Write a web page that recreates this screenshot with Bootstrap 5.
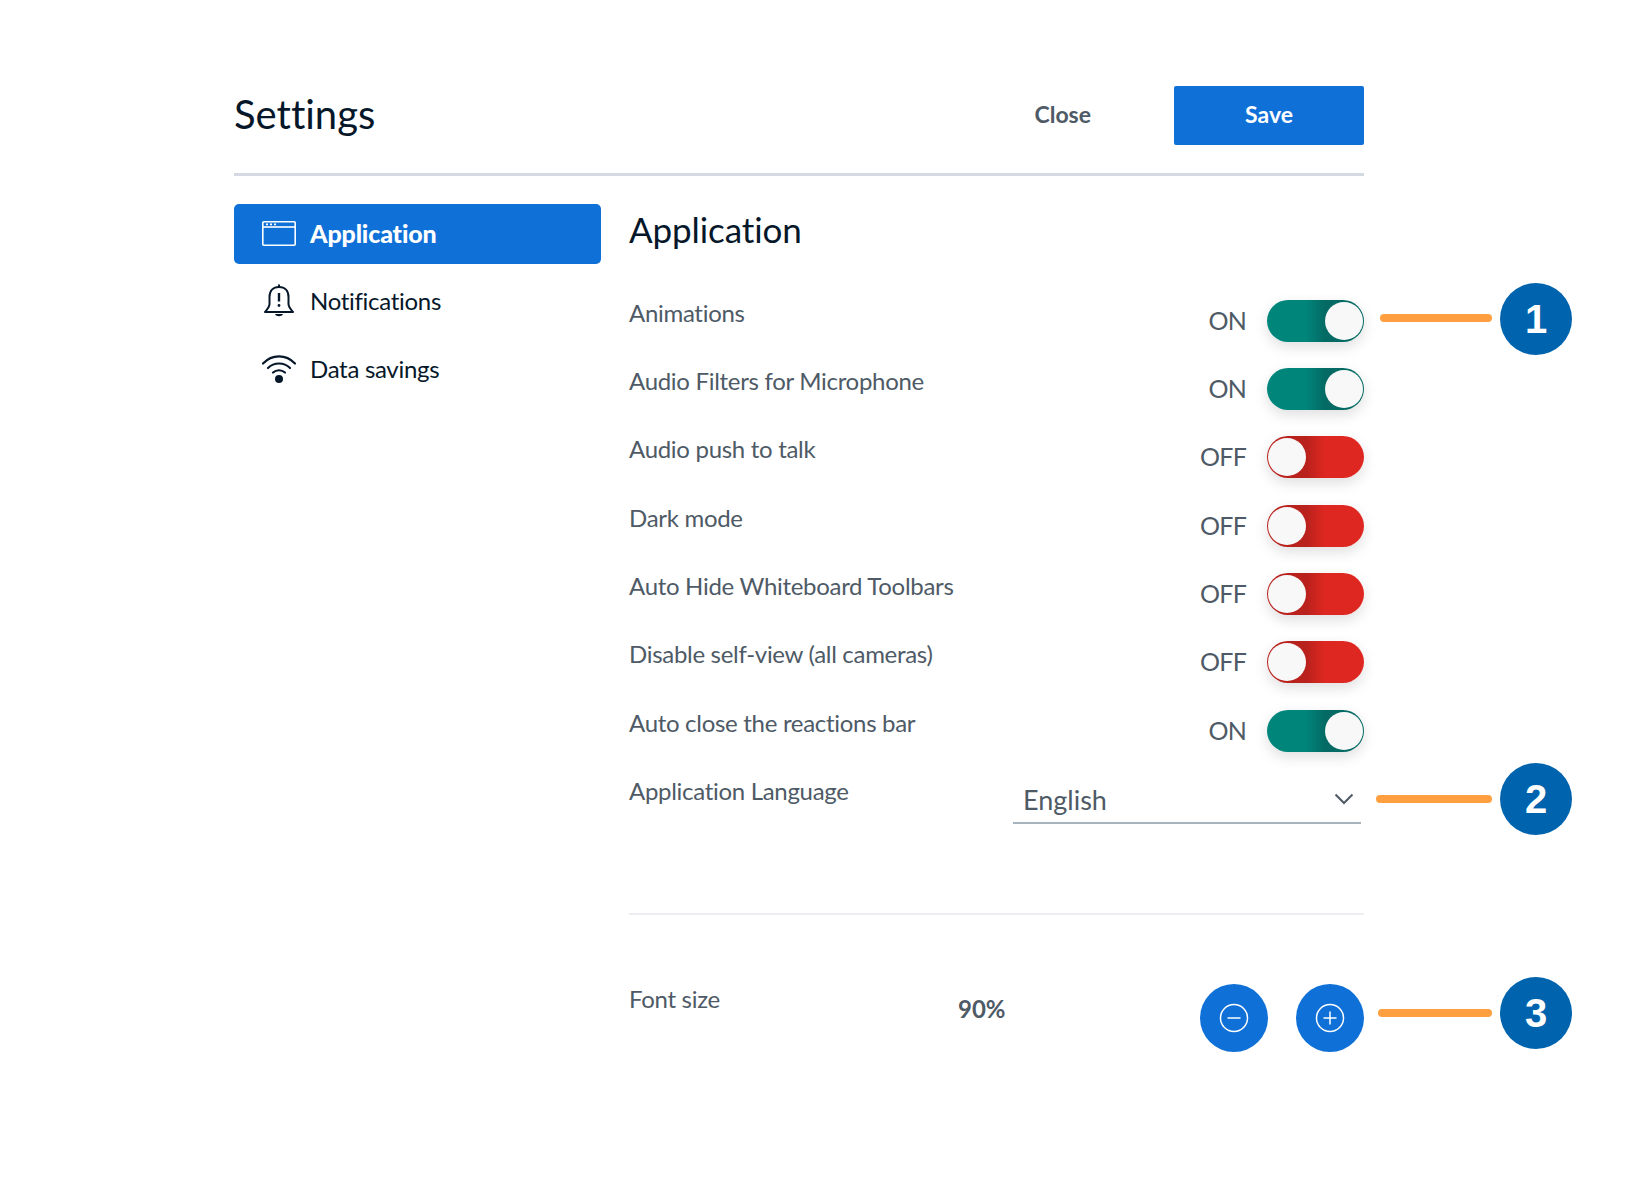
<!DOCTYPE html>
<html lang="en">
<head>
<meta charset="utf-8">
<title>Settings</title>
<link href="https://cdn.jsdelivr.net/npm/bootstrap@5.3.0/dist/css/bootstrap.min.css" rel="stylesheet">
<style>
html,body{background:#fff;height:1203px;overflow:hidden}
body{font-family:"Lato","Liberation Sans",sans-serif;color:#4e5a66;position:relative;font-variant-ligatures:none}
.sheet{width:1364px;padding:86px 0 0 234px}
.top-bar{height:58px}
.page-title{font-size:40px;line-height:56px;font-weight:400;color:#06172a;margin:0 0 2px}
.close-link{font-size:23px;font-weight:700;color:#4e5a66;margin-right:83px;margin-bottom:2px;text-decoration:none}
.save-btn{width:190px;height:59px;border-radius:2px;background:#0f70d7;color:#fff;font-size:23px;font-weight:700;border:0;padding:0 0 2px}
.rule-top{height:3px;background:#d5d9e2;margin:29px 0 0;opacity:1;border:0}
.main-area{margin-top:27.500px}
.side{width:367px;margin-right:28px}
.side-item{height:60px;padding-left:28px;font-size:24px;letter-spacing:-.3px;color:#06172a;gap:14px;border-radius:5px}
.side-item.on{background:#0f70d7;color:#fff;font-weight:900;font-size:25px;margin-bottom:3px;letter-spacing:-.15px}
.side-item.plain{height:68.500px}
.side-ico{width:34px;flex:none;display:block}
.content{width:735px}
.sec-title{font-size:35px;line-height:50px;font-weight:400;color:#06172a;margin:0 0 42px;letter-spacing:-.1px}
.set-row{height:68.400px}
.set-label{font-size:24px;line-height:36px;letter-spacing:-.3px;margin-top:-1px}
.state-label{font-size:25px;letter-spacing:-.8px;line-height:42px;margin-top:3px;margin-right:21px}
.tgl{width:97px;height:42px;margin-top:4px;border-radius:21px;padding:2px 1px;box-shadow:0 5px 14px rgba(0,0,0,.13)}
.tgl-on{background:linear-gradient(90deg,#00857b 40%,#046a63 60%);justify-content:flex-end}
.tgl-off{background:linear-gradient(270deg,#df2721 40%,#b8211c 60%);justify-content:flex-start}
.knob{width:38px;height:38px;border-radius:50%;background:#f8f8f8}
.lang-row{height:50px}
.lang-select{width:348px;height:50px;margin-right:3px;border-bottom:2px solid #a7b3bd;padding:2px 7px 0 10px;font-size:27px;line-height:1}
.rule-low{height:2px;background:#eceef1;margin:89px 0 0;opacity:1;border:0}
.font-row{margin-top:67px}
.font-label{width:329px}
.pct{width:242px;font-size:24px;font-weight:700;margin-top:9px;line-height:36px}
.round-btn{width:68px;height:68px;border-radius:50%;background:#0f70d7;border:0;padding:0;margin-top:2px}
.round-btn svg{width:30px;height:30px;display:block}
.gap-28{margin-right:28px}
.pointer{position:absolute;height:8px;border-radius:4px;background:#ff9f40}
.num{position:absolute;width:72px;height:72px;border-radius:50%;background:#0063ad;color:#fff;font:700 40px/72px "Liberation Sans",sans-serif;text-align:center}
.p1{left:1380px;top:314px;width:112px}.n1{left:1500px;top:283px}
.p2{left:1376px;top:795px;width:116px}.n2{left:1500px;top:763px}
.p3{left:1378px;top:1009px;width:114px}.n3{left:1500px;top:977px}
</style>
</head>
<body>
<div class="sheet">
  <header class="top-bar d-flex align-items-center justify-content-between">
    <h1 class="page-title">Settings</h1>
    <div class="d-flex align-items-center">
      <a class="close-link" href="#">Close</a>
      <button class="save-btn btn" type="button">Save</button>
    </div>
  </header>
  <hr class="rule-top">
  <div class="d-flex main-area">
    <nav class="side">
      <div class="side-item on d-flex align-items-center">
        <svg class="side-ico" viewBox="0 0 34 25" fill="none" stroke="#fff" stroke-width="1.6"><rect x=".8" y=".8" width="32.4" height="23.4" rx="1"/><path d="M1 6h32"/><path d="M4 3.4h2M8 3.4h2M12 3.4h2"/></svg>
        <span>Application</span>
      </div>
      <div class="side-item plain d-flex align-items-center">
        <svg class="side-ico" viewBox="0 0 34 36" fill="none" stroke="#06172a" stroke-width="2"><path d="M17 4c-6 0-9.500 4-9.500 10v7c0 3-2 5-4.500 8h28c-2.500-3-4.500-5-4.500-8v-7C26.500 8 23 4 17 4z" stroke-linejoin="round"/><path d="M17 4V1.500"/><path d="M17 10v8.500" stroke-width="2.400"/><circle cx="17" cy="22.500" r="1.400" fill="#06172a" stroke="none"/><path d="M13 31c1 3 7 3 8 0z" fill="#06172a" stroke="none"/></svg>
        <span>Notifications</span>
      </div>
      <div class="side-item plain d-flex align-items-center">
        <svg class="side-ico" viewBox="0 0 34 28" fill="none" stroke="#06172a" stroke-width="2.200" stroke-linecap="round"><path d="M1 8.500c9-9.500 23-9.500 32 0"/><path d="M6 13c6-6 16-6 22 0"/><path d="M11 17.500c3.500-3 8.500-3 12 0"/><circle cx="17" cy="24" r="4" fill="#06172a" stroke="none"/></svg>
        <span>Data savings</span>
      </div>
    </nav>
    <main class="content">
      <h2 class="sec-title">Application</h2>
      <div class="set-row d-flex align-items-start"><span class="set-label flex-grow-1">Animations</span><span class="state-label">ON</span><span class="tgl tgl-on d-flex"><span class="knob"></span></span></div>
      <div class="set-row d-flex align-items-start"><span class="set-label flex-grow-1">Audio Filters for Microphone</span><span class="state-label">ON</span><span class="tgl tgl-on d-flex"><span class="knob"></span></span></div>
      <div class="set-row d-flex align-items-start"><span class="set-label flex-grow-1">Audio push to talk</span><span class="state-label">OFF</span><span class="tgl tgl-off d-flex"><span class="knob"></span></span></div>
      <div class="set-row d-flex align-items-start"><span class="set-label flex-grow-1">Dark mode</span><span class="state-label">OFF</span><span class="tgl tgl-off d-flex"><span class="knob"></span></span></div>
      <div class="set-row d-flex align-items-start"><span class="set-label flex-grow-1">Auto Hide Whiteboard Toolbars</span><span class="state-label">OFF</span><span class="tgl tgl-off d-flex"><span class="knob"></span></span></div>
      <div class="set-row d-flex align-items-start"><span class="set-label flex-grow-1">Disable self-view (all cameras)</span><span class="state-label">OFF</span><span class="tgl tgl-off d-flex"><span class="knob"></span></span></div>
      <div class="set-row d-flex align-items-start"><span class="set-label flex-grow-1">Auto close the reactions bar</span><span class="state-label">ON</span><span class="tgl tgl-on d-flex"><span class="knob"></span></span></div>
      <div class="lang-row d-flex align-items-start justify-content-between">
        <span class="set-label">Application Language</span>
        <div class="lang-select d-flex align-items-center justify-content-between">
          <span>English</span>
          <svg width="20" height="12" viewBox="0 0 20 12" fill="none" stroke="#4e5a66" stroke-width="2"><path d="M1.500 1.500 10 10l8.500-8.500"/></svg>
        </div>
      </div>
      <hr class="rule-low">
      <div class="font-row d-flex align-items-start">
        <span class="set-label font-label">Font size</span>
        <span class="pct">90%</span>
        <button class="round-btn gap-28 d-flex align-items-center justify-content-center" type="button" aria-label="Decrease"><svg viewBox="0 0 30 30" fill="none" stroke="#fff" stroke-width="1.500"><circle cx="15" cy="15" r="13.500"/><path d="M8.500 15h13"/></svg></button>
        <button class="round-btn d-flex align-items-center justify-content-center" type="button" aria-label="Increase"><svg viewBox="0 0 30 30" fill="none" stroke="#fff" stroke-width="1.500"><circle cx="15" cy="15" r="13.500"/><path d="M8.500 15h13M15 8.500v13"/></svg></button>
      </div>
    </main>
  </div>
</div>
<span class="pointer p1"></span><span class="num n1">1</span>
<span class="pointer p2"></span><span class="num n2">2</span>
<span class="pointer p3"></span><span class="num n3">3</span>
<script src="https://cdn.jsdelivr.net/npm/bootstrap@5.3.0/dist/js/bootstrap.bundle.min.js"></script>
</body>
</html>
